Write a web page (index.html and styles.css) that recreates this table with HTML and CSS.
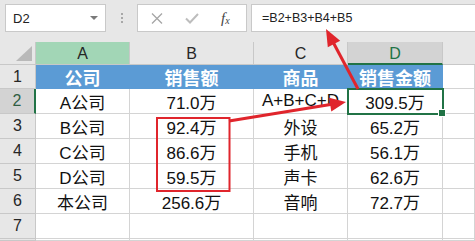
FILE: index.html
```html
<!DOCTYPE html>
<html lang="zh">
<head>
<meta charset="utf-8">
<link rel="stylesheet" href="styles.css">
</head>
<body>
<div class="app">
  <div class="topbar">
    <div class="namebox"><span>D2</span><span class="caret"></span></div>
    <div class="dots"><i></i><i></i><i></i></div>
    <div class="btns">
      <svg class="ic-x" width="12" height="11" viewBox="0 0 12 11"><path d="M1 0.5 L11 10.5 M11 0.5 L1 10.5" stroke="#a6a6a6" stroke-width="1.3" fill="none"/></svg>
      <svg class="ic-ok" width="14" height="11" viewBox="0 0 14 11"><path d="M1 5.5 L5 9.5 L13 1" stroke="#bdbdbd" stroke-width="2" fill="none"/></svg>
      <span class="fx">f<sub>x</sub></span>
    </div>
    <div class="formula">=B2+B3+B4+B5</div>
  </div>
  <div class="sheet">
    <div class="corner"></div>
    <div class="ch sel-col">A</div>
    <div class="ch">B</div>
    <div class="ch">C</div>
    <div class="ch act-col">D</div>
    <div class="ch blank"></div>

    <div class="rh">1</div>
    <div class="c hd">公司</div>
    <div class="c hd">销售额</div>
    <div class="c hd">商品</div>
    <div class="c hd">销售金额</div>
    <div class="c"></div>

    <div class="rh act-row">2</div>
    <div class="c">A公司</div>
    <div class="c">71.0万</div>
    <div class="c">A+B+C+D</div>
    <div class="c active">309.5万</div>
    <div class="c"></div>

    <div class="rh">3</div>
    <div class="c">B公司</div>
    <div class="c">92.4万</div>
    <div class="c">外设</div>
    <div class="c">65.2万</div>
    <div class="c"></div>

    <div class="rh">4</div>
    <div class="c">C公司</div>
    <div class="c">86.6万</div>
    <div class="c">手机</div>
    <div class="c">56.1万</div>
    <div class="c"></div>

    <div class="rh">5</div>
    <div class="c">D公司</div>
    <div class="c">59.5万</div>
    <div class="c">声卡</div>
    <div class="c">62.6万</div>
    <div class="c"></div>

    <div class="rh">6</div>
    <div class="c">本公司</div>
    <div class="c">256.6万</div>
    <div class="c">音响</div>
    <div class="c">72.7万</div>
    <div class="c"></div>

    <div class="rh">7</div>
    <div class="c"></div>
    <div class="c"></div>
    <div class="c"></div>
    <div class="c"></div>
    <div class="c"></div>

    <div class="rh"></div>
    <div class="c"></div>
    <div class="c"></div>
    <div class="c"></div>
    <div class="c"></div>
    <div class="c"></div>
  </div>
  <svg class="annot" width="475" height="241" viewBox="0 0 475 241">
    <rect x="157" y="118" width="72.5" height="73" fill="none" stroke="#e0252c" stroke-width="2"/>
    <line x1="229" y1="121" x2="332" y2="104.3" stroke="#e0252c" stroke-width="3"/>
    <polygon points="346,102 331.3,111.5 329.1,97.7" fill="#e0252c"/>
    <line x1="358" y1="89" x2="333" y2="42" stroke="#e0252c" stroke-width="3"/>
    <polygon points="326,29 340.2,40.7 327.8,47.3" fill="#e0252c"/>
  </svg>
</div>
</body>
</html>
```

FILE: styles.css
```css
* { box-sizing: border-box; }
html, body { margin: 0; padding: 0; background: #fff; }
.app {
  position: relative;
  width: 475px;
  height: 241px;
  overflow: hidden;
  font-family: "Liberation Sans", "Noto Sans CJK SC", sans-serif;
}
.topbar {
  height: 42px;
  background: #e7e7e7;
  display: flex;
  align-items: flex-start;
  padding: 4px 0 0 5px;
}
.namebox {
  width: 101px;
  height: 28px;
  background: #fff;
  border: 1px solid #c9c9c9;
  display: flex;
  align-items: center;
  justify-content: space-between;
  padding: 0 7px 0 7px;
  font-size: 13px;
  color: #222;
}
.caret {
  width: 0; height: 0;
  border-left: 4px solid transparent;
  border-right: 4px solid transparent;
  border-top: 4px solid #7a7a7a;
}
.dots {
  width: 31px;
  height: 28px;
  display: flex;
  flex-direction: column;
  align-items: center;
  justify-content: center;
  gap: 2px;
}
.dots i {
  display: block;
  width: 2px; height: 2px;
  background: #a8a8a8;
}
.btns {
  width: 110px;
  height: 28px;
  background: #fff;
  border: 1px solid #c9c9c9;
  display: flex;
  align-items: center;
  padding-left: 13px;
}
.ic-x { margin-right: 22px; }
.ic-ok { margin-right: 22px; }
.fx {
  font-family: "Liberation Serif", serif;
  font-style: italic;
  font-size: 15px;
  color: #444;
  line-height: 1;
}
.fx sub { font-size: 10px; vertical-align: -1px; }
.formula {
  flex: 1;
  margin-left: 4px;
  height: 28px;
  background: #fff;
  border: 1px solid #c9c9c9;
  border-right: none;
  padding-left: 10px;
  display: flex;
  align-items: center;
  font-size: 12.5px;
  color: #222;
}
.sheet {
  display: grid;
  grid-template-columns: 36px 94px 124px 94px 95px 1fr;
  grid-template-rows: 23px 24px repeat(6, 25px) 1fr;
  height: 199px;
}
.sheet > div {
  display: flex;
  align-items: center;
  justify-content: center;
}
.corner {
  background: #e7e7e7;
  border-right: 1px solid #c8c8c8;
  border-bottom: 1px solid #c8c8c8;
  position: relative;
}
.corner::after {
  content: "";
  position: absolute;
  right: 3px;
  bottom: 3px;
  width: 0; height: 0;
  border-left: 16px solid transparent;
  border-bottom: 15px solid #b9b9b9;
}
.ch {
  background: #e7e7e7;
  border-right: 1px solid #c8c8c8;
  border-bottom: 1px solid #c8c8c8;
  font-size: 16px;
  color: #262626;
  padding-top: 2px;
}
.ch.blank { border-right: none; }
.ch.sel-col { background: #a2d6b6; }
.ch.act-col {
  background: #d3d3d3;
  color: #217346;
  border-bottom: 2px solid #217346;
}
.rh {
  background: #e7e7e7;
  border-right: 1px solid #c8c8c8;
  border-bottom: 1px solid #c8c8c8;
  font-size: 16px;
  color: #262626;
}
.rh.act-row {
  background: #d3d3d3;
  color: #2f5e43;
  border-right: 2px solid #217346;
}
.c {
  background: #fff;
  border-right: 1px solid #d4d4d4;
  border-bottom: 1px solid #d4d4d4;
  font-size: 17px;
  color: #111;
}
.c.hd {
  background: #5b9bd5;
  border-right-color: #5b9bd5;
  border-bottom-color: #5b9bd5;
  color: #fff;
  font-size: 18px;
  font-weight: 700;
}
.c.active { position: relative; }
.c.active::after {
  content: "";
  position: absolute;
  top: -1px; left: -1px; right: -2px; bottom: -2px;
  border: 2px solid #217346;
}
.c.active::before {
  content: "";
  position: absolute;
  right: -4px; bottom: -4px;
  width: 6px; height: 6px;
  background: #217346;
  border: 1px solid #fff;
  z-index: 2;
}
.annot {
  position: absolute;
  left: 0; top: 0;
  pointer-events: none;
}
```
